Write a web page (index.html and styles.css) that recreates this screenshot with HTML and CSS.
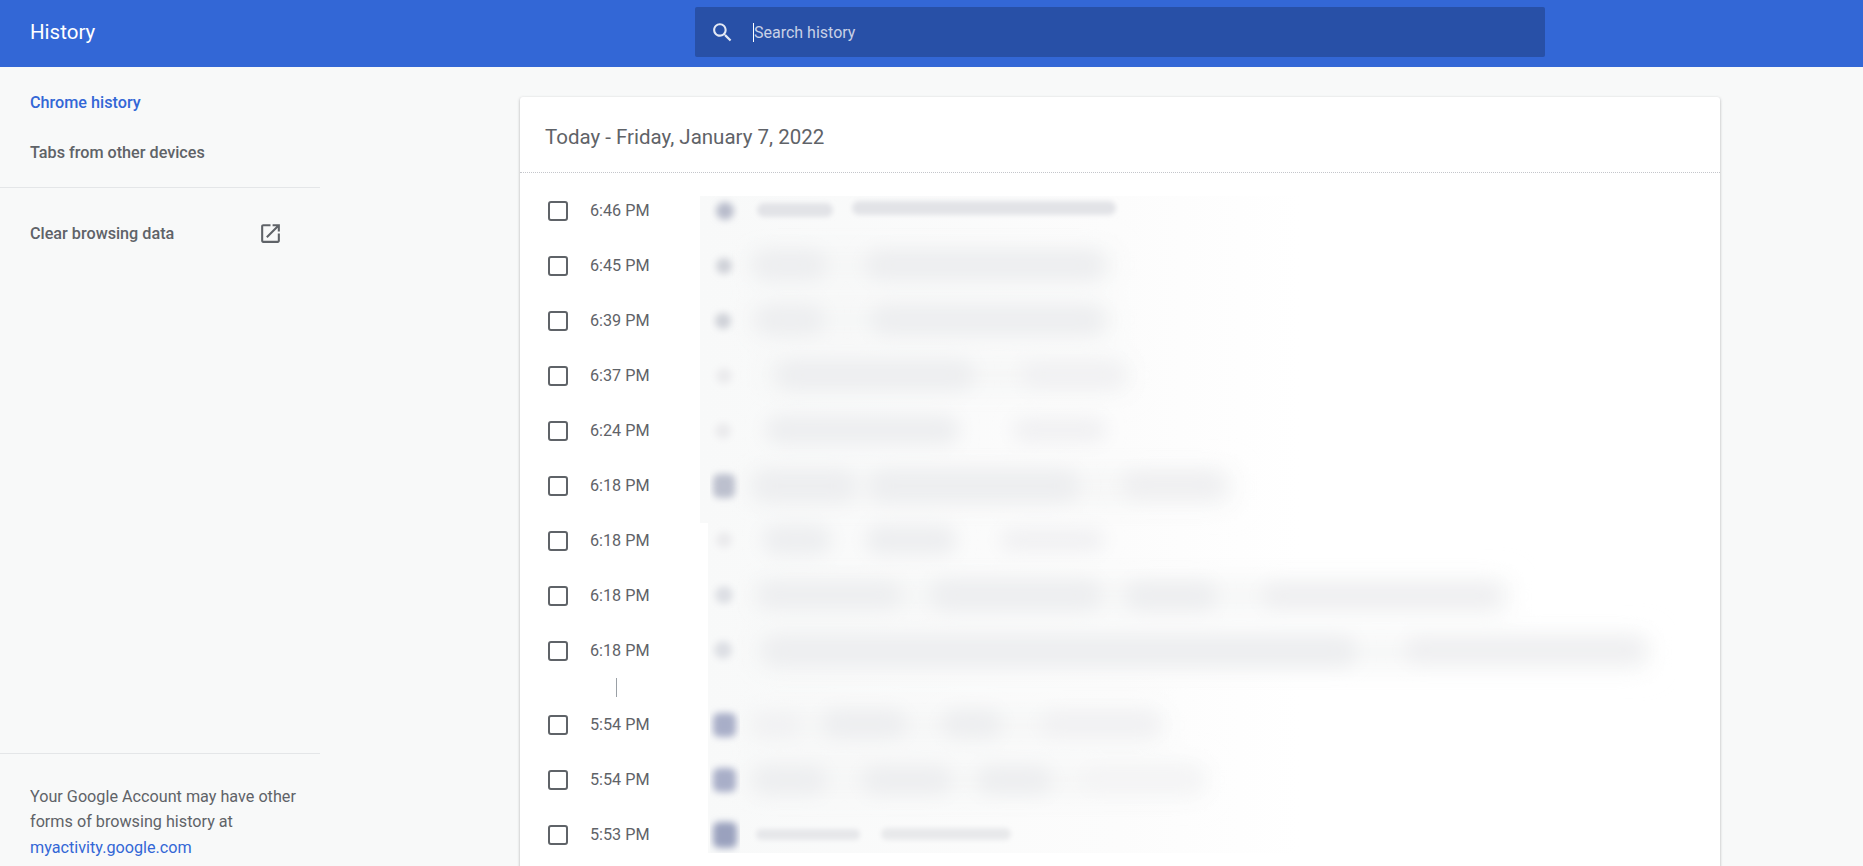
FILE: index.html
```html
<!DOCTYPE html>
<html lang="en">
<head>
    <meta charset="UTF-8">
    <meta name="viewport" content="width=device-width, initial-scale=1.0">
    <title>History</title>
    <link rel="stylesheet" href="styles.css">
</head>
<body>
    <header class="toolbar">
        <h1 class="toolbar-title">History</h1>
        <div class="search-box">
            <svg class="search-icon" viewBox="0 0 24 24"><path d="M15.5 14h-.79l-.28-.27C15.41 12.59 16 11.11 16 9.5 16 5.91 13.09 3 9.500 3S3 5.910 3 9.500 5.910 16 9.500 16c1.610 0 3.090-.59 4.230-1.570l.27.28v.79l5 4.990L20.490 19l-4.990-5zm-6 0C7.010 14 5 11.990 5 9.500S7.010 5 9.500 5 14 7.010 14 9.500 11.990 14 9.500 14z"/></svg>
            <span class="search-text">Search history</span>
        </div>
    </header>

    <div class="page">
        <nav class="sidebar">
            <a class="nav-item active">Chrome history</a>
            <a class="nav-item">Tabs from other devices</a>
            <div class="nav-clear">
                <a class="nav-item clear-link">
                    <span>Clear browsing data</span>
                    <svg class="icon" viewBox="0 0 24 24"><path d="M19 19H5V5h7V3H5c-1.110 0-2 .9-2 2v14c0 1.100.89 2 2 2h14c1.100 0 2-.9 2-2v-7h-2v7zM14 3v2h3.590l-9.830 9.830 1.410 1.410L19 6.410V10h2V3h-7z"/></svg>
                </a>
            </div>
            <div class="nav-footer">
                Your Google Account may have other forms of browsing history at
                <a class="footer-link">myactivity.google.com</a>
            </div>
        </nav>

        <main class="content">
            <section class="card">
                <h2 class="card-title">Today - Friday, January 7, 2022</h2>
                <div class="rows">
                    <div class="row"><div class="checkbox"></div><span class="time">6:46 PM</span><svg class="more" viewBox="0 0 24 24"><use href="#more-vert"/></svg></div>
                    <div class="row"><div class="checkbox"></div><span class="time">6:45 PM</span><svg class="more" viewBox="0 0 24 24"><use href="#more-vert"/></svg></div>
                    <div class="row"><div class="checkbox"></div><span class="time">6:39 PM</span><svg class="more" viewBox="0 0 24 24"><use href="#more-vert"/></svg></div>
                    <div class="row"><div class="checkbox"></div><span class="time">6:37 PM</span><svg class="more" viewBox="0 0 24 24"><use href="#more-vert"/></svg></div>
                    <div class="row"><div class="checkbox"></div><span class="time">6:24 PM</span><svg class="more" viewBox="0 0 24 24"><use href="#more-vert"/></svg></div>
                    <div class="row"><div class="checkbox"></div><span class="time">6:18 PM</span><svg class="more" viewBox="0 0 24 24"><use href="#more-vert"/></svg></div>
                    <div class="row"><div class="checkbox"></div><span class="time">6:18 PM</span><svg class="more" viewBox="0 0 24 24"><use href="#more-vert"/></svg></div>
                    <div class="row"><div class="checkbox"></div><span class="time">6:18 PM</span><svg class="more" viewBox="0 0 24 24"><use href="#more-vert"/></svg></div>
                    <div class="row"><div class="checkbox"></div><span class="time">6:18 PM</span><svg class="more" viewBox="0 0 24 24"><use href="#more-vert"/></svg></div>
                    <div class="time-gap"></div>
                    <div class="row"><div class="checkbox"></div><span class="time">5:54 PM</span><svg class="more" viewBox="0 0 24 24"><use href="#more-vert"/></svg></div>
                    <div class="row"><div class="checkbox"></div><span class="time">5:54 PM</span><svg class="more" viewBox="0 0 24 24"><use href="#more-vert"/></svg></div>
                    <div class="row"><div class="checkbox"></div><span class="time">5:53 PM</span><svg class="more" viewBox="0 0 24 24"><use href="#more-vert"/></svg></div>
                </div>

                <!-- borrado por cima dos titulos, coordenadas da pagina -->
                <svg class="redaction" viewBox="700 196 1000 657">
                    <defs>
                        <linearGradient id="fade" x1="700" x2="1300" y1="0" y2="0" gradientUnits="userSpaceOnUse">
                            <stop offset="0" stop-color="#f8f9f9"/>
                            <stop offset="0.7" stop-color="#fcfcfc"/>
                            <stop offset="1" stop-color="#ffffff"/>
                        </linearGradient>
                        <clipPath id="panel"><polygon points="700,196 1700,196 1700,853 708,853 708,523 700,523"/></clipPath>
                        <filter id="blur-sm"><feGaussianBlur stdDeviation="2.5"/></filter>
                        <filter id="blur-md"><feGaussianBlur stdDeviation="3.5"/></filter>
                        <filter id="blur-lg"><feGaussianBlur stdDeviation="9"/></filter>
                        <filter id="blur-xl"><feGaussianBlur stdDeviation="14"/></filter>
                    </defs>
                    <g clip-path="url(#panel)">
                        <rect x="700" y="196" width="1000" height="657" fill="url(#fade)"/>

                        <g filter="url(#blur-xl)" fill="#f5f6f6">
                            <rect x="745" y="250" width="370" height="30"/>
                            <rect x="745" y="305" width="370" height="30"/>
                            <rect x="760" y="360" width="370" height="30"/>
                            <rect x="745" y="470" width="490" height="34"/>
                            <rect x="750" y="580" width="760" height="32"/>
                            <rect x="750" y="636" width="900" height="32"/>
                            <rect x="745" y="710" width="420" height="30"/>
                            <rect x="745" y="765" width="460" height="30"/>
                        </g>

                        <g filter="url(#blur-lg)" fill="#edeef0">
                            <rect x="752" y="250" width="75" height="30" rx="15"/>
                            <rect x="865" y="250" width="240" height="30" rx="15"/>
                            <rect x="755" y="305" width="70" height="30" rx="15"/>
                            <rect x="870" y="305" width="235" height="30" rx="15"/>
                            <rect x="775" y="360" width="200" height="30" rx="15"/>
                            <rect x="1020" y="362" width="105" height="26" rx="13" fill="#f1f1f3"/>
                            <rect x="765" y="415" width="195" height="30" rx="15"/>
                            <rect x="1012" y="417" width="95" height="26" rx="13" fill="#f1f1f3"/>
                            <rect x="752" y="470" width="105" height="32" rx="16"/>
                            <rect x="868" y="470" width="212" height="32" rx="16"/>
                            <rect x="1122" y="472" width="102" height="26" rx="13" fill="#efeff1"/>
                            <rect x="762" y="525" width="70" height="30" rx="15"/>
                            <rect x="865" y="525" width="92" height="30" rx="15"/>
                            <rect x="1000" y="528" width="105" height="24" rx="12" fill="#f1f1f3"/>
                            <rect x="757" y="582" width="145" height="26" rx="13"/>
                            <rect x="930" y="580" width="172" height="30" rx="15"/>
                            <rect x="1125" y="582" width="92" height="28" rx="14"/>
                            <rect x="1262" y="584" width="240" height="24" rx="12" fill="#efeff1"/>
                            <rect x="762" y="636" width="595" height="30" rx="15"/>
                            <rect x="1405" y="638" width="240" height="24" rx="12" fill="#efeff1"/>
                            <rect x="752" y="714" width="50" height="22" rx="11" fill="#f1f1f3"/>
                            <rect x="822" y="710" width="85" height="28" rx="14"/>
                            <rect x="942" y="710" width="60" height="28" rx="14"/>
                            <rect x="1040" y="712" width="120" height="24" rx="12" fill="#f1f1f3"/>
                            <rect x="752" y="766" width="75" height="28" rx="14"/>
                            <rect x="862" y="766" width="90" height="28" rx="14"/>
                            <rect x="977" y="766" width="75" height="28" rx="14"/>
                            <rect x="1082" y="768" width="120" height="22" rx="11" fill="#f4f4f5"/>
                        </g>

                        <g filter="url(#blur-sm)">
                            <rect x="757" y="203" width="76" height="14" rx="7" fill="#e2e3e7"/>
                            <rect x="852" y="201" width="264" height="14" rx="7" fill="#e2e3e7"/>
                            <rect x="756" y="829" width="104" height="11" rx="5" fill="#e6e7ea"/>
                            <rect x="881" y="828" width="130" height="12" rx="6" fill="#e8e9eb"/>
                        </g>

                        <g filter="url(#blur-md)">
                            <circle cx="725" cy="211" r="9" fill="#b8bccb"/>
                            <circle cx="724" cy="266" r="8" fill="#cfd1d8"/>
                            <circle cx="723" cy="321" r="8" fill="#cfd1d8"/>
                            <circle cx="724" cy="376" r="8" fill="#ebebed"/>
                            <circle cx="723" cy="431" r="8" fill="#ebebed"/>
                            <rect x="713" y="474" width="22" height="24" rx="6" fill="#bcc0ce"/>
                            <circle cx="724" cy="540" r="8" fill="#ebebed"/>
                            <circle cx="724" cy="595" r="9" fill="#dddfe4"/>
                            <circle cx="723" cy="650" r="9" fill="#dddfe4"/>
                            <rect x="713" y="713" width="23" height="24" rx="6" fill="#a8aec8"/>
                            <rect x="713" y="768" width="23" height="24" rx="6" fill="#a8aec8"/>
                            <rect x="713" y="822" width="24" height="26" rx="6" fill="#9aa1be"/>
                        </g>
                    </g>
                </svg>
            </section>
        </main>
    </div>

    <svg class="sprites"><defs><path id="more-vert" d="M12 8c1.100 0 2-.9 2-2s-.9-2-2-2-2 .9-2 2 .9 2 2 2zm0 2c-1.100 0-2 .9-2 2s.9 2 2 2 2-.9 2-2-.9-2-2-2zm0 6c-1.100 0-2 .9-2 2s.9 2 2 2 2-.9 2-2-.9-2-2-2z"/></defs></svg>
</body>
</html>
```

FILE: styles.css
```css
body {
    font-family: Roboto, Arial, sans-serif;
    background-color: #f8f9f9;
    color: #5f6368;
    margin: 0;
    height: 100vh;
    overflow: hidden;
    display: flex;
    flex-direction: column;
}
.sprites {
    display: none;
}
.toolbar {
    display: flex;
    align-items: center;
    height: 67px;
    box-sizing: border-box;
    padding-bottom: 3px;
    flex-shrink: 0;
    background-color: #3367d6;
    color: white;
}
.toolbar-title {
    width: 665px;
    margin: 0;
    padding-left: 30px;
    font-size: 20.5px;
    font-weight: 400;
}
.search-box {
    display: flex;
    align-items: center;
    width: 850px;
    height: 50px;
    box-sizing: border-box;
    padding-left: 15px;
    background-color: #2850a7;
    border-radius: 2px;
}
.search-icon {
    width: 25px;
    height: 25px;
    fill: #e4e9f5;
}
.search-text {
    margin-left: 18px;
    padding-right: 4px;
    border-left: 1px solid white;
    font-size: 16px;
    line-height: 19px;
    color: #c9d1e6;
}
.page {
    display: flex;
    flex: 1;
    min-height: 0;
}
.sidebar {
    display: flex;
    flex-direction: column;
    width: 320px;
    flex-shrink: 0;
    padding-top: 10px;
    box-sizing: border-box;
}
.nav-item {
    display: flex;
    align-items: center;
    height: 50px;
    padding-left: 30px;
    font-size: 16.2px;
    font-weight: 500;
}
.nav-item.active {
    color: #3367d6;
}
.nav-clear {
    margin-top: 10px;
    padding-top: 20px;
    border-top: 1px solid #e4e6e8;
}
.clear-link {
    justify-content: space-between;
    padding-right: 37px;
}
.icon {
    width: 25px;
    height: 25px;
    fill: #5f6368;
}
.nav-footer {
    margin-top: auto;
    padding: 30px 20px 6px 30px;
    border-top: 1px solid #e4e6e8;
    font-size: 16.2px;
    line-height: 25.3px;
}
.footer-link {
    display: block;
    color: #3367d6;
}
.content {
    flex: 1;
    min-width: 0;
    padding: 30px 0 0 200px;
    overflow: hidden;
}
.card {
    position: relative;
    width: 1200px;
    padding-bottom: 30px;
    background: white;
    border-radius: 3px;
    box-shadow: 0 1px 3px rgba(60, 64, 67, 0.4);
}
.card-title {
    height: 75px;
    margin: 0;
    padding-left: 25px;
    border-bottom: 1px dotted #c4c6cb;
    font-size: 20.5px;
    font-weight: 400;
    line-height: 81px;
    box-sizing: content-box;
}
.rows {
    padding-top: 10px;
}
.row {
    display: flex;
    align-items: center;
    height: 55px;
    padding: 0 25px 0 28px;
}
.checkbox {
    width: 20px;
    height: 20px;
    box-sizing: border-box;
    border: 2px solid #5f6368;
    border-radius: 3px;
}
.time {
    margin-left: 22px;
    font-size: 16.2px;
}
.more {
    width: 25px;
    height: 25px;
    margin-left: auto;
    fill: #5f6368;
}
.time-gap {
    width: 1px;
    height: 19px;
    margin-left: 96px;
    background-color: #9aa0a6;
}
.redaction {
    position: absolute;
    left: 180px;
    top: 99px;
    width: 1000px;
    height: 657px;
}
```
